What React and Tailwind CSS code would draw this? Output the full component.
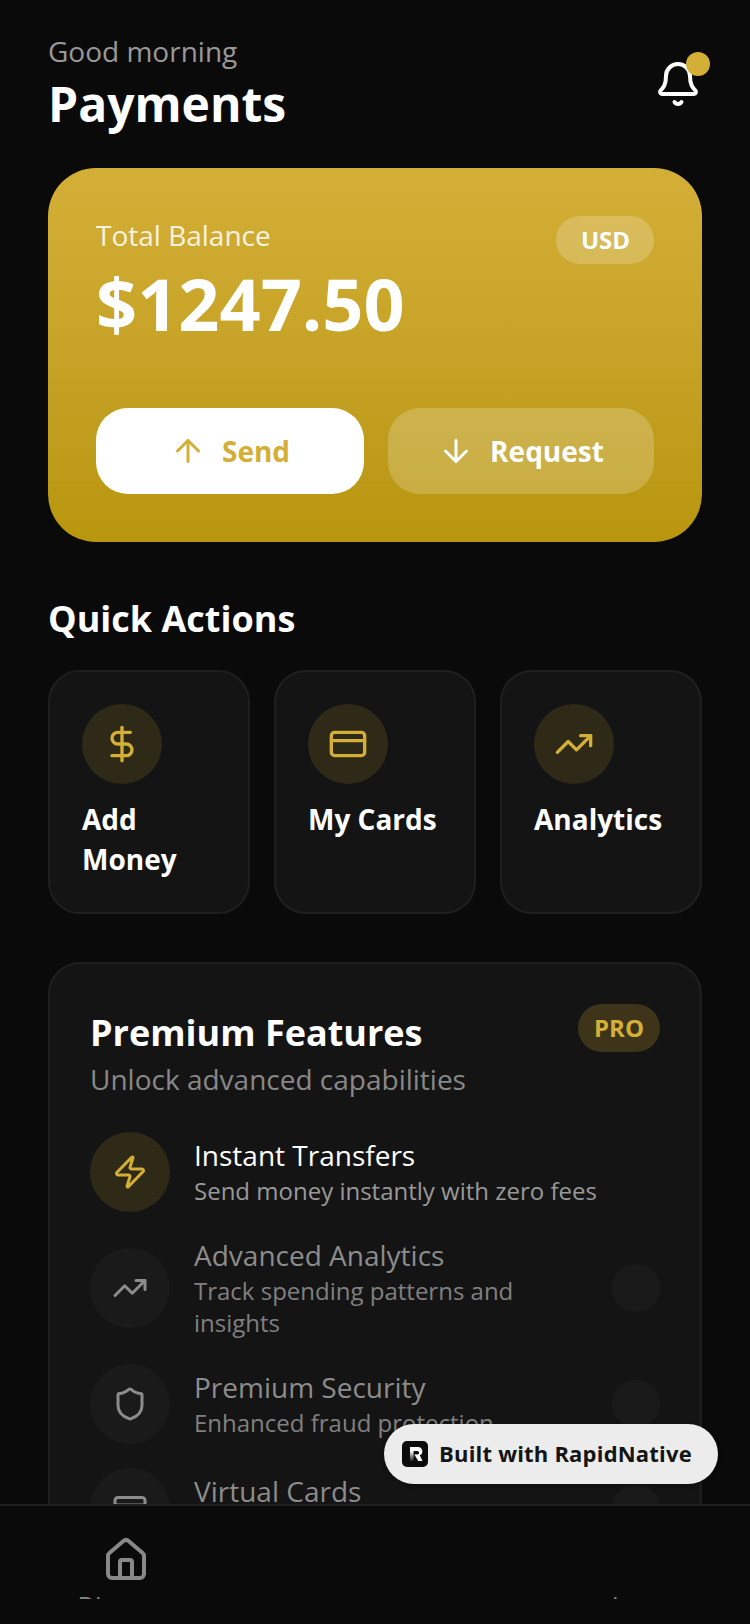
import { ArrowDown, ArrowUp, Bell, CreditCard, DollarSign, House, Shield, TrendingUp, Zap } from "lucide-react";

const quickActions = [
  { label: "Add Money", Icon: DollarSign },
  { label: "My Cards", Icon: CreditCard },
  { label: "Analytics", Icon: TrendingUp },
];

const features = [
  { title: "Instant Transfers", text: "Send money instantly with zero fees", Icon: Zap, active: true },
  { title: "Advanced Analytics", text: "Track spending patterns and insights", Icon: TrendingUp },
  { title: "Premium Security", text: "Enhanced fraud protection", Icon: Shield },
  { title: "Virtual Cards", text: "Create cards for online shopping", Icon: CreditCard },
];

function FeatureRow({ title, text, Icon, active }) {
  return (
    <div className="flex items-center gap-6">
      <div className={`flex h-20 w-20 shrink-0 items-center justify-center rounded-full ${active ? "bg-[#2f2917]" : "bg-[#1a1a1a]"}`}>
        <Icon size={36} strokeWidth={2} className={active ? "text-[#d4af37]" : "text-[#8c8c8c]"} />
      </div>
      <div className="min-w-0 flex-1 pb-px">
        <div className={`mb-px text-[28px] leading-[38px] ${active ? "text-white" : "text-[#8c8c8c]"}`}>{title}</div>
        <div className={`text-[24px] leading-[32px] ${active ? "text-[#999999]" : "text-[#808080]"}`}>{text}</div>
      </div>
      {!active && <div className="h-12 w-12 shrink-0 rounded-full bg-[#1a1a1a]" />}
    </div>
  );
}

export default function App() {
  return (
    <div className="relative flex h-[1624px] w-[750px] flex-col overflow-hidden bg-[#0a0a0a] font-['Open_Sans',sans-serif]">
      <main className="min-h-0 flex-1 overflow-hidden px-12 pt-8">
        <header className="flex items-center justify-between">
          <div>
            <div className="mb-[2px] text-[28px] leading-[38px] text-[#999999]">Good morning</div>
            <h1 className="text-[48px] font-bold leading-[64px] text-white">Payments</h1>
          </div>
          <div className="relative">
            <Bell size={48} strokeWidth={2} className="text-white" />
            <span className="absolute right-[-8px] top-[-8px] h-6 w-6 rounded-full bg-[#d4af37]" />
          </div>
        </header>

        <section className="mt-8 rounded-[48px] bg-gradient-to-b from-[#d4af37] to-[#b8960c] p-12">
          <div className="flex items-start justify-between">
            <div>
              <div className="text-[28px] leading-[38px] text-white/85">Total Balance</div>
              <div className="text-[72px] font-bold leading-[98px] text-white">$1247.50</div>
            </div>
            <div className="flex h-12 items-center rounded-3xl bg-white/20 pl-[25px] pr-6 text-[24px] font-bold text-white">USD</div>
          </div>
          <div className="mt-[56px] flex gap-6">
            <button className="flex h-[86px] w-[268px] shrink-0 items-center justify-center gap-4 rounded-[32px] bg-white text-[28px] font-bold text-[#d4af37]">
              <ArrowUp size={36} strokeWidth={2} />
              Send
            </button>
            <button className="flex h-[86px] flex-1 items-center justify-center gap-4 rounded-[32px] bg-white/20 text-[28px] font-bold text-white">
              <ArrowDown size={36} strokeWidth={2} />
              Request
            </button>
          </div>
        </section>

        <h2 className="mb-[22px] mt-12 text-[36px] font-bold leading-[58px] text-white">Quick Actions</h2>
        <div className="flex gap-6">
          {quickActions.map(({ label, Icon }) => (
            <div key={label} className="h-[244px] flex-1 rounded-[32px] border-2 border-[#1f1f1f] bg-[#141414] p-8">
              <div className="flex h-20 w-20 items-center justify-center rounded-full bg-[#2f2917]">
                <Icon size={40} strokeWidth={2} className="text-[#d4af37]" />
              </div>
              <div className="mt-[15px] text-[28px] font-bold leading-[40px] text-white">{label}</div>
            </div>
          ))}
        </div>

        <section className="mt-12 rounded-[32px] border-2 border-[#1f1f1f] bg-[#141414] p-10">
          <div className="flex items-start justify-between">
            <div>
              <div className="text-[36px] font-bold leading-[58px] text-white">Premium Features</div>
              <div className="text-[28px] leading-[34px] text-[#888888]">Unlock advanced capabilities</div>
            </div>
            <div className="flex h-12 items-center rounded-3xl bg-[#3d3419] px-4 text-[24px] font-bold text-[#d4af37]">PRO</div>
          </div>
          <div className="mt-[36px] flex flex-col gap-6">
            {features.map((f) => (
              <FeatureRow key={f.title} {...f} />
            ))}
          </div>
        </section>
      </main>

      <nav className="flex h-[120px] shrink-0 border-t-2 border-[#1f1f1f] bg-[#0a0a0a]">
        <div className="flex flex-1 flex-col items-center pl-px pt-[30px]">
          <House size={48} strokeWidth={2} className="text-[#888888]" />
          <div className="mt-[13px] h-[2px] overflow-hidden text-[24px] leading-[16px] text-[#888888]">Discover</div>
        </div>
        <div className="flex-1" />
        <div className="flex flex-1 flex-col items-center pt-[91px]">
          <div className="mr-5 h-[2px] overflow-hidden text-[24px] leading-[16px] text-[#888888]">i</div>
        </div>
      </nav>

      <div className="absolute left-[384px] top-[1424px] flex h-[60px] w-[334px] items-center gap-[11px] rounded-full bg-[#ececec] pl-[18px] shadow-[0_2px_4px_rgba(0,0,0,0.3)]">
        <svg width="26" height="26" viewBox="0 0 26 26">
          <defs>
            <linearGradient id="stem" x1="0" y1="0" x2="0" y2="1">
              <stop offset="0" stopColor="#ffffff" />
              <stop offset="1" stopColor="#222222" />
            </linearGradient>
          </defs>
          <rect width="26" height="26" rx="5" fill="#0b0b0b" />
          <path d="M8 6h8a4.3 4.3 0 0 1 1.8 8.2L20.5 20h-4.2l-4-6.5h3a1.8 1.8 0 0 0 0-3.6H8z" fill="#ffffff" />
          <path d="M8 9.9h3.6V20H8z" fill="url(#stem)" />
        </svg>
        <span className="-mt-[2px] text-[22px] font-bold tracking-[0.2px] text-[#141414]">Built with RapidNative</span>
      </div>
    </div>
  );
}
